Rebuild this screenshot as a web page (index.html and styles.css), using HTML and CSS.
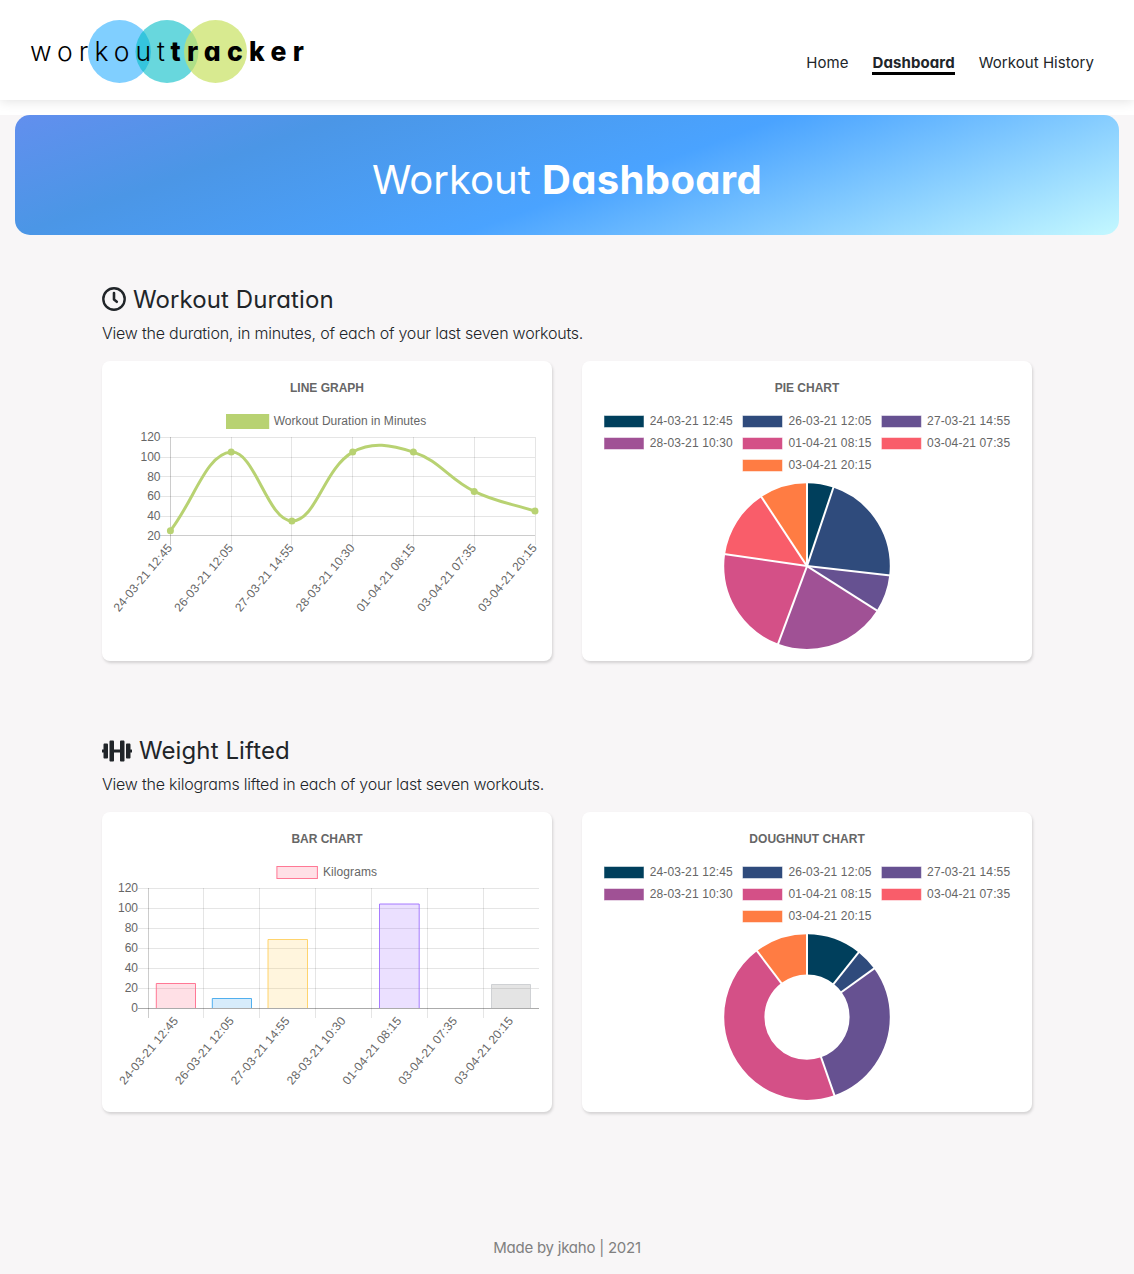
FILE: index.html
```html
<!DOCTYPE html>
<html lang="en">
<head>
<meta charset="utf-8">
<title>Workout Dashboard</title>
<link rel="stylesheet" href="styles.css">
</head>
<body>
<header class="header">
  <svg class="logo" viewBox="0 0 320 100" width="320" height="100" role="img" aria-label="workout tracker">
    <circle cx="119.5" cy="51.5" r="31.5" fill="#80cfff"/>
    <circle cx="167" cy="51.5" r="31.5" fill="#04bdc6" fill-opacity=".6"/>
    <circle cx="215.5" cy="51.5" r="31.5" fill="#c9e265" fill-opacity=".72"/>
    <text class="logo-light" x="30" y="61" textLength="135">workout</text>
    <text class="logo-bold" x="170.5" y="61" textLength="133.5">tracker</text>
  </svg>
  <nav class="nav">
    <a class="nav-link">Home</a>
    <a class="nav-link active">Dashboard</a>
    <a class="nav-link">Workout History</a>
  </nav>
</header>
<div class="banner-wrap">
  <div class="banner"><h1>Workout <strong>Dashboard</strong></h1></div>
</div>
<main class="main">
  <section class="section">
    <h2><svg class="clock" width="24" height="24" viewBox="0 0 24 24"><circle cx="12" cy="12" r="10.7" fill="none" stroke="#212529" stroke-width="2.4"/><path d="M12 6V12.6L14.8 14.8" fill="none" stroke="#212529" stroke-width="2.6" stroke-linecap="round" stroke-linejoin="round"/></svg><span>Workout Duration</span></h2>
    <p>View the duration, in minutes, of each of your last seven workouts.</p>
    <div class="cards">
      <div class="card">
        <svg viewBox="102 361 450 300" width="450" height="300">
          <text class="title" x="327" y="392" textLength="74">LINE GRAPH</text>
          <rect x="226" y="414" width="43.2" height="15" fill="#b8d272"/>
          <text x="273.7" y="425" textLength="152.5">Workout Duration in Minutes</text>
          <path class="grid" d="M160 437.5H535M160 457.5H535M160 476.5H535M160 496.5H535M160 516.5H535M231.5 437V545M291.5 437V545M352.5 437V545M413.5 437V545M474.5 437V545M535.5 437V545"/>
          <path class="axis" d="M170.5 437V545M160 535.5H535"/>
          <g class="ylabels">
            <text x="160.5" y="441">120</text><text x="160.5" y="461">100</text><text x="160.5" y="481">80</text><text x="160.5" y="500">60</text><text x="160.5" y="520">40</text><text x="160.5" y="540">20</text>
          </g>
          <g class="xlabels">
            <text transform="translate(169.7 545.5) rotate(-50)" y="4.2" textLength="84">24-03-21 12:45</text>
            <text transform="translate(230.5 545.5) rotate(-50)" y="4.2" textLength="84">26-03-21 12:05</text>
            <text transform="translate(291.2 545.5) rotate(-50)" y="4.2" textLength="84">27-03-21 14:55</text>
            <text transform="translate(352 545.5) rotate(-50)" y="4.2" textLength="84">28-03-21 10:30</text>
            <text transform="translate(412.7 545.5) rotate(-50)" y="4.2" textLength="84">01-04-21 08:15</text>
            <text transform="translate(473.5 545.5) rotate(-50)" y="4.2" textLength="84">03-04-21 07:35</text>
            <text transform="translate(534.3 545.5) rotate(-50)" y="4.2" textLength="84">03-04-21 20:15</text>
          </g>
          <path fill="none" stroke="#b8d272" stroke-width="3" d="M170.4 530.7C194.7 499.3 205.9 454.1 231.2 452.1C254.5 450.2 267.6 520.9 291.9 520.9C316.2 520.9 323.5 468.7 352.7 452.1C372.1 441.1 391.2 444.9 413.4 452.1C439.8 460.6 448.4 478.9 474.2 491.4C497 502.5 510.7 503.2 535 511.1"/>
          <g fill="#b8d272"><circle cx="170.4" cy="530.7" r="3.5"/><circle cx="231.2" cy="452.1" r="3.5"/><circle cx="291.9" cy="520.9" r="3.5"/><circle cx="352.7" cy="452.1" r="3.5"/><circle cx="413.4" cy="452.1" r="3.5"/><circle cx="474.2" cy="491.4" r="3.5"/><circle cx="535" cy="511.1" r="3.5"/></g>
        </svg>
      </div>
      <div class="card">
        <svg viewBox="582 361 450 300" width="450" height="300">
          <text class="title" x="807" y="392" textLength="64.5">PIE CHART</text>
          <g class="swatches">
            <rect x="604" y="415.5" width="40" height="12" fill="#003f5c"/><rect x="742.5" y="415.5" width="40" height="12" fill="#2f4b7c"/><rect x="881.4" y="415.5" width="40" height="12" fill="#665191"/>
            <rect x="604" y="437.5" width="40" height="12" fill="#a05195"/><rect x="742.5" y="437.5" width="40" height="12" fill="#d45087"/><rect x="881.4" y="437.5" width="40" height="12" fill="#f95d6a"/>
            <rect x="742.5" y="459.5" width="40" height="12" fill="#ff7c43"/>
          </g>
          <text x="649.7" y="425" textLength="83">24-03-21 12:45</text><text x="788.4" y="425" textLength="83">26-03-21 12:05</text><text x="927.1" y="425" textLength="83">27-03-21 14:55</text>
          <text x="649.7" y="447" textLength="83">28-03-21 10:30</text><text x="788.4" y="447" textLength="83">01-04-21 08:15</text><text x="927.1" y="447" textLength="83">03-04-21 07:35</text>
          <text x="788.4" y="469" textLength="83">03-04-21 20:15</text>
          <g transform="translate(807 566.1) rotate(-90)" fill="none" stroke-width="82.8">
            <circle r="41.4" pathLength="485" stroke="#003f5c" stroke-dasharray="25 460"/>
            <circle r="41.4" pathLength="485" stroke="#2f4b7c" stroke-dasharray="105 380" stroke-dashoffset="-25"/>
            <circle r="41.4" pathLength="485" stroke="#665191" stroke-dasharray="35 450" stroke-dashoffset="-130"/>
            <circle r="41.4" pathLength="485" stroke="#a05195" stroke-dasharray="105 380" stroke-dashoffset="-165"/>
            <circle r="41.4" pathLength="485" stroke="#d45087" stroke-dasharray="105 380" stroke-dashoffset="-270"/>
            <circle r="41.4" pathLength="485" stroke="#f95d6a" stroke-dasharray="65 420" stroke-dashoffset="-375"/>
            <circle r="41.4" pathLength="485" stroke="#ff7c43" stroke-dasharray="45 440" stroke-dashoffset="-440"/>
          </g>
          <g transform="translate(807 566.1)" stroke="#fff" stroke-width="2">
            <path d="M0 0V-84"/><path d="M0 0V-84" transform="rotate(18.56)"/><path d="M0 0V-84" transform="rotate(96.49)"/><path d="M0 0V-84" transform="rotate(122.47)"/><path d="M0 0V-84" transform="rotate(200.41)"/><path d="M0 0V-84" transform="rotate(278.35)"/><path d="M0 0V-84" transform="rotate(326.6)"/>
          </g>
        </svg>
      </div>
    </div>
  </section>
  <section class="section">
    <h2><svg width="30" height="24" viewBox="0 0 640 512"><path fill="#212529" d="M104 96H56c-13.3 0-24 10.7-24 24v104H8c-4.4 0-8 3.6-8 8v48c0 4.4 3.6 8 8 8h24v104c0 13.3 10.7 24 24 24h48c13.3 0 24-10.7 24-24V120c0-13.3-10.7-24-24-24zm528 128h-24V120c0-13.3-10.7-24-24-24h-48c-13.3 0-24 10.7-24 24v272c0 13.3 10.7 24 24 24h48c13.3 0 24-10.7 24-24V288h24c4.4 0 8-3.6 8-8v-48c0-4.4-3.6-8-8-8zM456 32h-48c-13.3 0-24 10.7-24 24v168H256V56c0-13.3-10.7-24-24-24h-48c-13.3 0-24 10.7-24 24v400c0 13.3 10.7 24 24 24h48c13.3 0 24-10.7 24-24V288h128v168c0 13.3 10.7 24 24 24h48c13.3 0 24-10.7 24-24V56c0-13.3-10.7-24-24-24z"/></svg><span>Weight Lifted</span></h2>
    <p>View the kilograms lifted in each of your last seven workouts.</p>
    <div class="cards">
      <div class="card">
        <svg viewBox="102 812 450 300" width="450" height="300">
          <text class="title" x="327" y="843" textLength="71">BAR CHART</text>
          <rect x="276.9" y="866.5" width="40.5" height="12" fill="#ff6384" fill-opacity=".2" stroke="#ff6384" stroke-opacity=".85"/>
          <text x="323" y="876" textLength="54">Kilograms</text>
          <path class="grid" d="M138 888.5H539M138 908.5H539M138 928.5H539M138 948.5H539M138 968.5H539M138 988.5H539M203.5 888V1018M259.5 888V1018M315.5 888V1018M371.5 888V1018M427.5 888V1018M483.5 888V1018"/>
          <path class="axis" d="M148.5 888V1018"/>
          <g class="ylabels">
            <text x="138" y="892">120</text><text x="138" y="912">100</text><text x="138" y="932">80</text><text x="138" y="952">60</text><text x="138" y="972">40</text><text x="138" y="992">20</text><text x="138" y="1012">0</text>
          </g>
          <g class="xlabels">
            <text transform="translate(175.5 1018.5) rotate(-50)" y="4.2" textLength="84">24-03-21 12:45</text>
            <text transform="translate(231.3 1018.5) rotate(-50)" y="4.2" textLength="84">26-03-21 12:05</text>
            <text transform="translate(287.1 1018.5) rotate(-50)" y="4.2" textLength="84">27-03-21 14:55</text>
            <text transform="translate(343 1018.5) rotate(-50)" y="4.2" textLength="84">28-03-21 10:30</text>
            <text transform="translate(398.8 1018.5) rotate(-50)" y="4.2" textLength="84">01-04-21 08:15</text>
            <text transform="translate(454.6 1018.5) rotate(-50)" y="4.2" textLength="84">03-04-21 07:35</text>
            <text transform="translate(510.5 1018.5) rotate(-50)" y="4.2" textLength="84">03-04-21 20:15</text>
          </g>
          <g fill-opacity=".2" stroke-opacity=".85">
            <path d="M156.3 1008V983.5H195.5V1008" fill="#ff6384" stroke="#ff6384"/>
            <path d="M212.3 1008V998.5H251.5V1008" fill="#36a2eb" stroke="#36a2eb"/>
            <path d="M268 1008V939.5H307.5V1008" fill="#ffcd56" stroke="#ffcd56"/>
            <path d="M379.5 1008V904H419.2V1008" fill="#9966ff" stroke="#9966ff"/>
            <path d="M491.5 1008V984.5H530.5V1008" fill="#777" stroke="#c9cbcf"/>
          </g>
          <path d="M138 1008.5H539" stroke="#000" stroke-opacity=".33"/>
        </svg>
      </div>
      <div class="card">
        <svg viewBox="582 812 450 300" width="450" height="300">
          <text class="title" x="807" y="843" textLength="115.5">DOUGHNUT CHART</text>
          <g class="swatches">
            <rect x="604" y="866.5" width="40" height="12" fill="#003f5c"/><rect x="742.5" y="866.5" width="40" height="12" fill="#2f4b7c"/><rect x="881.4" y="866.5" width="40" height="12" fill="#665191"/>
            <rect x="604" y="888.5" width="40" height="12" fill="#a05195"/><rect x="742.5" y="888.5" width="40" height="12" fill="#d45087"/><rect x="881.4" y="888.5" width="40" height="12" fill="#f95d6a"/>
            <rect x="742.5" y="910.5" width="40" height="12" fill="#ff7c43"/>
          </g>
          <text x="649.7" y="876" textLength="83">24-03-21 12:45</text><text x="788.4" y="876" textLength="83">26-03-21 12:05</text><text x="927.1" y="876" textLength="83">27-03-21 14:55</text>
          <text x="649.7" y="898" textLength="83">28-03-21 10:30</text><text x="788.4" y="898" textLength="83">01-04-21 08:15</text><text x="927.1" y="898" textLength="83">03-04-21 07:35</text>
          <text x="788.4" y="920" textLength="83">03-04-21 20:15</text>
          <g transform="translate(807 1017.1) rotate(-90)" fill="none" stroke-width="40.2">
            <circle r="62.7" pathLength="233" stroke="#003f5c" stroke-dasharray="25 208"/>
            <circle r="62.7" pathLength="233" stroke="#2f4b7c" stroke-dasharray="10 223" stroke-dashoffset="-25"/>
            <circle r="62.7" pathLength="233" stroke="#665191" stroke-dasharray="69 164" stroke-dashoffset="-35"/>
            <circle r="62.7" pathLength="233" stroke="#d45087" stroke-dasharray="105 128" stroke-dashoffset="-104"/>
            <circle r="62.7" pathLength="233" stroke="#ff7c43" stroke-dasharray="24 209" stroke-dashoffset="-209"/>
          </g>
          <g transform="translate(807 1017.1)" stroke="#fff" stroke-width="2">
            <path d="M0 -41V-84"/><path d="M0 -41V-84" transform="rotate(38.63)"/><path d="M0 -41V-84" transform="rotate(54.08)"/><path d="M0 -41V-84" transform="rotate(160.69)"/><path d="M0 -41V-84" transform="rotate(322.92)"/>
          </g>
        </svg>
      </div>
    </div>
  </section>
</main>
<footer class="footer">Made by jkaho | 2021</footer>
</body>
</html>
```
FILE: styles.css
```css
* { box-sizing: border-box; }
body {
  margin: 0;
  color: #212529;
  font-family: Inter, "Noto Sans", sans-serif;
  font-feature-settings: "cv11";
  height: 1274px;
  display: flex;
  flex-direction: column;
  background: linear-gradient(#fff 0 115px, #f8f6f7 115px);
}
h1, h2, p { margin: 0; font-weight: 400; }
.header {
  height: 100px;
  flex: none;
  display: flex;
  justify-content: space-between;
  background: #fff;
  box-shadow: 0 0 12px rgba(0, 0, 0, .14);
}
.logo-light, .logo-bold { fill: #000; font-size: 26.5px; font-weight: 300; }
.logo-bold { font-weight: 800; }
.nav { display: flex; gap: 24px; padding: 53px 40px 0 0; font-size: 15px; line-height: 19px; align-items: flex-start; }
.nav-link { white-space: nowrap; letter-spacing: .05px; }
.nav .active { font-weight: 700; letter-spacing: .1px; border-bottom: 3px solid #000; }
.banner-wrap { padding: 15px 15px 0; }
.banner {
  height: 120px;
  border-radius: 15px;
  display: flex;
  align-items: center;
  justify-content: center;
  padding-top: 10px;
  background: linear-gradient(160deg, #628fee 0%, #4b96e6 23%, #4aa3ff 54%, #c4f8ff 100%);
  color: #fff;
}
h1 { font-size: 40px; font-weight: 400; line-height: 48px; white-space: nowrap; }
h1 strong { font-weight: 700; letter-spacing: .35px; }
.main { width: 930px; margin: 50px auto 0; display: flex; flex-direction: column; gap: 75px; }
h2 { display: flex; align-items: center; gap: 7px; font-size: 24px; line-height: 29px; letter-spacing: .1px; white-space: nowrap; }
.clock { margin-top: -2px; }
p { font-size: 16px; font-weight: 300; line-height: 24px; letter-spacing: -.22px; margin: 7px 0 16px; white-space: nowrap; }
.cards { display: flex; gap: 30px; }
.card { width: 450px; height: 300px; border-radius: 8px; background: #fff; box-shadow: 1px 2px 3px rgba(0, 0, 0, .15); }
.card svg { display: block; }
.card text { font: 12px "Liberation Sans", Arial, sans-serif; fill: #666; }
.card .title { font-weight: 700; text-anchor: middle; }
.ylabels, .xlabels { text-anchor: end; }
.grid { stroke: #000; stroke-opacity: .1; fill: none; }
.axis { stroke: #000; stroke-opacity: .2; fill: none; }
.swatches { stroke: #fff; stroke-opacity: .5; }
.footer { margin-top: auto; padding-bottom: 16px; line-height: 20px; text-align: center; font-size: 15px; letter-spacing: -.23px; color: #808080; }
```
